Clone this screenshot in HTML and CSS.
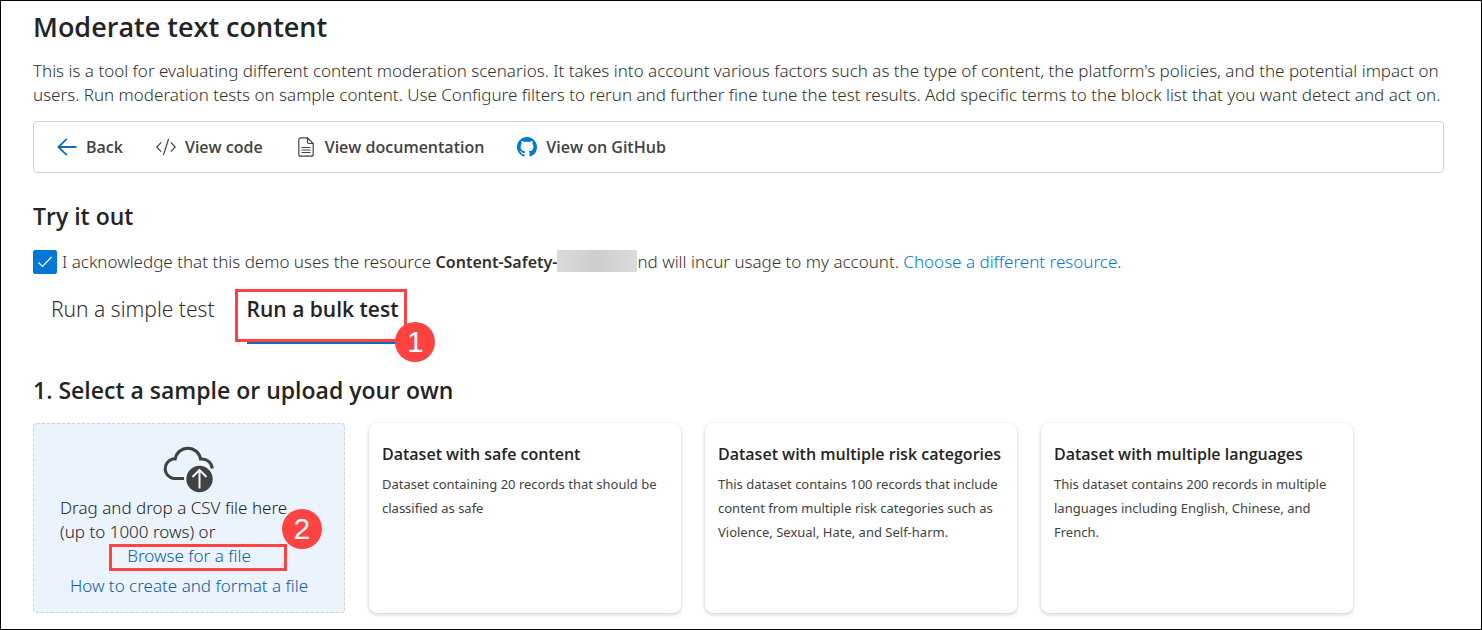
FILE: index.html
```html
<!DOCTYPE html>
<html lang="en">
<head>
<meta charset="utf-8">
<meta name="viewport" content="width=device-width, initial-scale=1">
<title>Moderate text content</title>
<link rel="stylesheet" href="styles.css">
</head>
<body>
<main class="page">
  <h1 class="title">Moderate text content</h1>
  <p class="intro">This is a tool for evaluating different content moderation scenarios. It takes into account various factors such as the type of content, the platform's policies, and the potential impact on users. Run moderation tests on sample content. Use Configure filters to rerun and further fine tune the test results. Add specific terms to the block list that you want detect and act on.</p>

  <nav class="toolbar" aria-label="Page actions">
    <button class="tool" type="button">
      <svg class="icon" viewBox="0 0 20 20" fill="none" stroke="#0f6cbd" stroke-width="1.8"><path d="M19.5 10H1.5M9.8 1.8 1.4 10l8.400 8.200"/></svg>
      <span>Back</span>
    </button>
    <button class="tool" type="button">
      <svg class="icon" viewBox="0 0 20 20" fill="none" stroke="#424242" stroke-width="1.2"><path d="M5.200 5.300.8 10l4.400 4.700M14.800 5.300l4.400 4.700-4.400 4.700M12.600 2 7.400 18"/></svg>
      <span>View code</span>
    </button>
    <button class="tool" type="button">
      <svg class="icon" viewBox="0 0 20 20" fill="none" stroke="#424242" stroke-width="1.200"><path d="M11.500.8H4.800a2 2 0 0 0-2 2v14.400a2 2 0 0 0 2 2h10.400a2 2 0 0 0 2-2V6.500zM11.500.8v4.200a1.500 1.500 0 0 0 1.500 1.500h4.200M5.500 10.500h9M5.500 13h9M5.500 15.500h9"/></svg>
      <span>View documentation</span>
    </button>
    <button class="tool" type="button">
      <svg class="icon" viewBox="0 0 16 16" fill="#0078d4"><path d="M8 0C3.580 0 0 3.580 0 8c0 3.540 2.290 6.530 5.470 7.590.4.070.55-.17.55-.38 0-.19-.01-.82-.01-1.490-2.010.37-2.530-.49-2.690-.94-.09-.23-.48-.94-.82-1.130-.28-.15-.68-.52-.01-.53.63-.01 1.080.58 1.230.82.72 1.210 1.870.87 2.330.66.070-.52.28-.87.51-1.070-1.780-.2-3.640-.89-3.640-3.950 0-.87.31-1.590.82-2.150-.08-.2-.36-1.020.08-2.120 0 0 .67-.21 2.200.82.64-.18 1.320-.27 2-.27s1.360.09 2 .27c1.530-1.040 2.200-.82 2.200-.82.44 1.100.16 1.920.08 2.120.51.56.82 1.270.82 2.150 0 3.070-1.870 3.750-3.650 3.950.29.25.54.73.54 1.480 0 1.070-.01 1.930-.01 2.200 0 .21.15.46.55.38A8.010 8.010 0 0 0 16 8c0-4.420-3.580-8-8-8z"/></svg>
      <span>View on GitHub</span>
    </button>
  </nav>

  <h2 class="subtitle try">Try it out</h2>

  <div class="ack">
    <input class="check" type="checkbox" id="ack" checked>
    <p class="ack-text"><label for="ack">I acknowledge that this demo uses the resource <strong class="resource">Content-Safety-</strong><span class="redacted"></span>nd will incur usage to my account.</label> <a class="choose" href="#resources">Choose a different resource</a>.</p>
  </div>

  <div class="tabs" role="tablist">
    <button class="tab" type="button" role="tab" aria-selected="false">Run a simple test</button>
    <div class="marked marked-tab">
      <button class="tab tab-active" type="button" role="tab" aria-selected="true">Run a bulk test</button>
      <span class="frame frame-tab"></span>
      <span class="step step-tab">1</span>
    </div>
  </div>

  <h2 class="subtitle select">1. Select a sample or upload your own</h2>

  <section class="cards">
    <div class="upload">
      <svg class="cloud" viewBox="1 0 52 48" fill="none"><path d="M22 33.500H11.500a10 10 0 0 1-1-19.500h2.700a12.800 12.800 0 0 1 25.300 0h1.300a10.500 10.500 0 0 1 10.500 9.500" stroke="#424242" stroke-width="3"/><circle cx="37.500" cy="34" r="15" fill="#ebf3fc"/><circle cx="37.500" cy="34" r="13.200" fill="#424242"/><path d="M37.500 43.500v-18M30.500 32l7-7 7 7" stroke="#ebf3fc" stroke-width="2"/></svg>
      <p class="drop">Drag and drop a CSV file here (up to 1000 rows) or</p>
      <div class="marked">
        <a class="link" href="#browse">Browse for a file</a>
        <span class="frame frame-browse"></span>
        <span class="step step-browse">2</span>
      </div>
      <a class="link how" href="#format">How to create and format a file</a>
    </div>
    <article class="card">
      <h3 class="card-title">Dataset with safe content</h3>
      <p class="card-text">Dataset containing 20 records that should be classified as safe</p>
    </article>
    <article class="card">
      <h3 class="card-title">Dataset with multiple risk categories</h3>
      <p class="card-text">This dataset contains 100 records that include content from multiple risk categories such as Violence, Sexual, Hate, and Self-harm.</p>
    </article>
    <article class="card">
      <h3 class="card-title">Dataset with multiple languages</h3>
      <p class="card-text">This dataset contains 200 records in multiple languages including English, Chinese, and French.</p>
    </article>
  </section>
</main>
</body>
</html>
```
FILE: styles.css
```css
* { box-sizing: border-box; }

body {
  margin: 0;
  background: #fff;
  color: #242424;
  font-family: "Noto Sans", "Open Sans", sans-serif;
  font-size: 17px;
  font-weight: 300;
  line-height: 24px;
}

h1, h2, h3, p { margin: 0; }
button { font: inherit; border: 0; padding: 0; background: none; cursor: pointer; }
a { text-decoration: none; }

.page {
  min-height: 100vh;
  border: 1px solid #000;
  padding: 8px 37px 15px 32px;
}

.title, .subtitle, .tool, .card-title, .tab-active {
  font-family: "Open Sans", "Noto Sans", sans-serif;
  font-weight: 600;
}

.title { font-size: 27px; line-height: 36px; }
.intro { margin-top: 14px; color: #323130; }

.toolbar {
  display: flex;
  flex-wrap: wrap;
  gap: 33px;
  margin-top: 14px;
  padding: 13px 23px;
  border: 1px solid #d1d1d1;
  border-radius: 4px;
}
.tool {
  display: flex;
  align-items: center;
  gap: 9px;
  color: #424242;
  font-size: 16px;
}
.icon { width: 20px; height: 20px; }

.subtitle { font-size: 23px; line-height: 28px; }
.try { margin-top: 29px; }
.select { margin-top: 32px; }

.ack {
  display: flex;
  gap: 5px;
  margin-top: 20px;
  color: #323130;
}
.check {
  flex: none;
  appearance: none;
  width: 24px;
  height: 24px;
  margin: 0;
  border: 1px solid #0078d4;
  border-radius: 2px;
}
.check:checked {
  background: #0078d4 url("data:image/svg+xml,%3Csvg xmlns='http://www.w3.org/2000/svg' viewBox='0 0 22 22'%3E%3Cpath d='M4.500 11.500l4 4 9-9.500' fill='none' stroke='white' stroke-width='1.200'/%3E%3C/svg%3E") center / 22px no-repeat;
}
.resource { font-size: 16px; font-weight: 600; }
.redacted {
  display: inline-block;
  width: 80px;
  height: 22px;
  vertical-align: top;
  background: linear-gradient(90deg, #dadada, #cdcdcd 50%, #dcdcdc);
}
.choose { color: #0078d4; }

.tabs {
  display: flex;
  gap: 32px;
  margin-top: 21px;
  padding-left: 18px;
}
.tab {
  padding-bottom: 17px;
  border-bottom: 4px solid transparent;
  color: #323130;
  font-size: 21px;
  line-height: 28px;
}
.tab-active { color: #242424; border-bottom-color: #0f6cbd; }

.marked { position: relative; }
.frame { position: absolute; border: 3px solid #ff4343; pointer-events: none; }
.frame-tab { inset: -6px -9px 2px -12px; }
.frame-browse { inset: 0 -36px -3px -18px; }
.step {
  position: absolute;
  width: 40px;
  height: 40px;
  border-radius: 50%;
  background: #ff4343;
  color: #fff;
  font-family: "Liberation Sans", Arial, sans-serif;
  font-size: 30px;
  font-weight: 400;
  line-height: 40px;
  text-align: center;
}
.step-tab { right: -37px; bottom: -18px; }
.step-browse { right: -71px; top: -35px; }

.cards {
  display: grid;
  grid-template-columns: repeat(auto-fill, 312px);
  gap: 24px;
  margin-top: 19px;
}
.upload {
  display: flex;
  flex-direction: column;
  align-items: center;
  min-height: 190px;
  padding: 21px 26px 14px;
  border: 1px dashed #d1d1d1;
  border-radius: 4px;
  background: #ebf3fc;
}
.cloud { width: 52px; height: 48px; margin-bottom: 3px; }
.drop { align-self: flex-start; max-width: 240px; }
.link { color: #115ea3; }
.how { margin-top: 6px; }

.card {
  padding: 19px 13px;
  border-radius: 8px;
  box-shadow: 0 0 2px rgba(0, 0, 0, .12), 0 2px 4px rgba(0, 0, 0, .14);
}
.card-title { font-size: 16px; line-height: 24px; }
.card-text { margin-top: 6px; color: #424242; font-size: 13px; font-weight: 400; }
```
